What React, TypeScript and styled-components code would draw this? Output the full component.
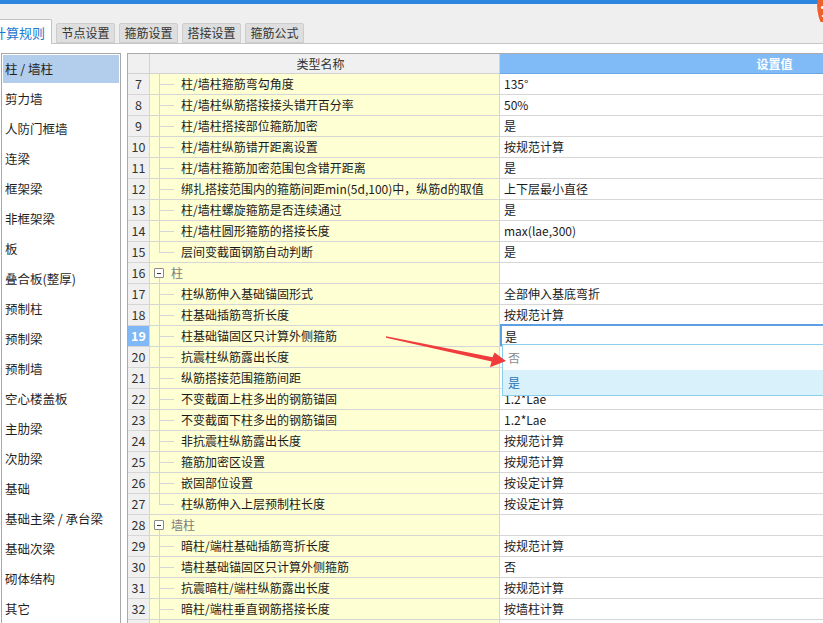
import * as React from 'react';
import styled, { createGlobalStyle } from 'styled-components';

const GlobalStyle = createGlobalStyle`
  html, body {
    margin: 0;
    padding: 0;
    background: #fff;
  }
  body {
    font-family: "Noto Sans CJK SC", "Noto Sans", sans-serif;
    font-size: 12px;
    color: #1a1a1a;
  }
`;

const Page = styled.div`
  position: relative;
  width: 823px;
  height: 623px;
  overflow: hidden;
  display: flex;
  flex-direction: column;
  background: #fff;
`;

const TopStrip = styled.div`
  flex: none;
  height: 4px;
  background: #2d86e0;
`;

const TabBar = styled.div`
  flex: none;
  box-sizing: border-box;
  height: 40px;
  display: flex;
  align-items: flex-end;
  gap: 4px;
  background: #efefef;
  border-bottom: 1px solid #c6c6c6;
`;

const Tab = styled.div<{ $active?: boolean }>`
  box-sizing: border-box;
  flex: none;
  width: ${p => (p.$active ? 66 : 59)}px;
  height: ${p => (p.$active ? 25 : 20)}px;
  margin-left: ${p => (p.$active ? -14 : 0)}px;
  margin-bottom: ${p => (p.$active ? -1 : 0)}px;
  display: flex;
  align-items: center;
  justify-content: center;
  border: 1px solid ${p => (p.$active ? '#c2c2c2' : '#cdcdcd')};
  border-bottom: ${p => (p.$active ? 'none' : '1px solid #cdcdcd')};
  border-radius: 2px 2px 0 0;
  background: ${p => (p.$active ? '#fff' : '#dedede')};
  color: ${p => (p.$active ? '#1d78d0' : '#333')};
  font-size: ${p => (p.$active ? 13 : 12)}px;
  line-height: 1;
  white-space: nowrap;
`;

const Body = styled.div`
  flex: 1;
  min-height: 0;
  display: flex;
  align-items: flex-start;
  gap: 6px;
  padding: 9px 0 0 1px;
`;

const Sidebar = styled.div`
  box-sizing: border-box;
  flex: none;
  width: 120px;
  height: 620px;
  display: flex;
  flex-direction: column;
  gap: 2px;
  padding: 1px;
  border: 1px solid #a9a9a9;
`;

const SideItem = styled.div<{ $selected?: boolean }>`
  flex: none;
  height: 28px;
  display: flex;
  align-items: center;
  padding-left: 2px;
  background: ${p => (p.$selected ? '#b3cdec' : 'transparent')};
  color: #1f1f1f;
  font-size: 12.5px;
  line-height: 1;
  white-space: nowrap;
`;

const Grid = styled.div`
  box-sizing: border-box;
  flex: none;
  width: 923px;
  border-top: 1px solid #ababab;
  border-left: 1px solid #ababab;
`;

const Row = styled.div<{ $head?: boolean }>`
  display: grid;
  grid-template-columns: 22px 350px 1fr;
  height: ${p => (p.$head ? 20 : 21)}px;
  line-height: 1;
`;

const HeadCell = styled.div<{ $accent?: boolean; $shift?: number }>`
  box-sizing: border-box;
  display: flex;
  align-items: center;
  justify-content: center;
  padding-right: ${p => p.$shift || 0}px;
  background: ${p => (p.$accent ? '#80bbf8' : '#f0f0f0')};
  border-right: 1px solid ${p => (p.$accent ? '#9ccaf7' : '#d2d2d2')};
  border-bottom: 1px solid ${p => (p.$accent ? '#6aa5e6' : '#d2d2d2')};
  color: ${p => (p.$accent ? '#fff' : '#333')};
  font-weight: ${p => (p.$accent ? 700 : 400)};
`;

const NumCell = styled.div<{ $active?: boolean }>`
  box-sizing: border-box;
  display: flex;
  align-items: center;
  justify-content: center;
  background: ${p => (p.$active ? '#7fb8f5' : '#f0f0f0')};
  border-right: 1px solid #d6d6d6;
  border-bottom: 1px solid #d6d6d6;
  color: ${p => (p.$active ? '#fff' : '#333')};
  font-weight: ${p => (p.$active ? 700 : 400)};
  font-size: 12.5px;
`;

const NameCell = styled.div<{ $group?: boolean }>`
  box-sizing: border-box;
  display: flex;
  align-items: stretch;
  padding-left: ${p => (p.$group ? 4 : 9)}px;
  background: #ffffd4;
  border-right: 1px solid #d6d6d6;
  border-bottom: 1px solid #d6d6d6;
  color: ${p => (p.$group ? '#7d7d7d' : '#1a1a1a')};
  white-space: nowrap;
  overflow: hidden;
`;

const Label = styled.span`
  display: flex;
  align-items: center;
`;

const Guide = styled.span<{ $last?: boolean }>`
  position: relative;
  flex: none;
  width: 22px;
  &::before {
    content: '';
    position: absolute;
    left: 0;
    top: 0;
    width: 1px;
    height: ${p => (p.$last ? '50%' : 'calc(100% + 1px)')};
    background: #d6d6d6;
  }
  &::after {
    content: '';
    position: absolute;
    left: 0;
    top: 50%;
    width: 15px;
    height: 1px;
    background: #d6d6d6;
  }
`;

const Toggle = styled.span`
  position: relative;
  flex: none;
  width: 10px;
  margin-right: 7px;
  display: flex;
  align-items: center;
  &::after {
    content: '';
    position: absolute;
    left: 5px;
    top: calc(50% + 5px);
    bottom: -1px;
    width: 1px;
    background: #d6d6d6;
  }
`;

const ToggleBox = styled.span`
  box-sizing: border-box;
  width: 10px;
  height: 10px;
  border: 1px solid #8a8a8a;
  border-radius: 1px;
  background: #fff;
  display: flex;
  align-items: center;
  justify-content: center;
  &::before {
    content: '';
    width: 4px;
    height: 1px;
    background: #333;
  }
`;

const ValueCell = styled.div`
  position: relative;
  box-sizing: border-box;
  display: flex;
  align-items: center;
  padding-left: 4px;
  background: #fff;
  border-bottom: 1px solid #d6d6d6;
  white-space: nowrap;
`;

const Editor = styled.div`
  position: absolute;
  z-index: 4;
  top: -2px;
  left: 0;
  right: 0;
  bottom: 0;
  box-sizing: border-box;
  display: flex;
  align-items: center;
  padding-left: 3px;
  padding-top: 1px;
  background: #fff;
  border-top: 2px solid #5c9fe3;
  border-left: 2px solid #5c9fe3;
`;

const Dropdown = styled.div`
  position: absolute;
  z-index: 5;
  top: 18px;
  left: 2px;
  width: 640px;
  background: #fff;
  border: 1px solid #8ccfec;
`;

const Option = styled.div<{ $hover?: boolean }>`
  height: 25px;
  display: flex;
  align-items: center;
  padding-left: 5px;
  background: ${p => (p.$hover ? '#d9f1fa' : '#fff')};
  color: ${p => (p.$hover ? '#2a73b6' : '#8a8a8a')};
`;

const Arrow = styled.svg`
  position: absolute;
  z-index: 10;
  left: 0;
  top: 0;
  pointer-events: none;
`;

const CornerIcon = styled.svg`
  position: absolute;
  right: 0;
  top: 0;
`;

const sideItems = [
  '柱 / 墙柱', '剪力墙', '人防门框墙', '连梁', '框架梁', '非框架梁', '板', '叠合板(整厚)',
  '预制柱', '预制梁', '预制墙', '空心楼盖板', '主肋梁', '次肋梁', '基础',
  '基础主梁 / 承台梁', '基础次梁', '砌体结构', '其它',
];

interface RuleRow {
  no?: number;
  name: string;
  value?: string;
  group?: boolean;
  last?: boolean;
}

const rows: RuleRow[] = [
  { no: 7, name: '柱/墙柱箍筋弯勾角度', value: '135°' },
  { no: 8, name: '柱/墙柱纵筋搭接接头错开百分率', value: '50%' },
  { no: 9, name: '柱/墙柱搭接部位箍筋加密', value: '是' },
  { no: 10, name: '柱/墙柱纵筋错开距离设置', value: '按规范计算' },
  { no: 11, name: '柱/墙柱箍筋加密范围包含错开距离', value: '是' },
  { no: 12, name: '绑扎搭接范围内的箍筋间距min(5d,100)中，纵筋d的取值', value: '上下层最小直径' },
  { no: 13, name: '柱/墙柱螺旋箍筋是否连续通过', value: '是' },
  { no: 14, name: '柱/墙柱圆形箍筋的搭接长度', value: 'max(lae,300)' },
  { no: 15, name: '层间变截面钢筋自动判断', value: '是', last: true },
  { no: 16, name: '柱', group: true },
  { no: 17, name: '柱纵筋伸入基础锚固形式', value: '全部伸入基底弯折' },
  { no: 18, name: '柱基础插筋弯折长度', value: '按规范计算' },
  { no: 19, name: '柱基础锚固区只计算外侧箍筋', value: '是' },
  { no: 20, name: '抗震柱纵筋露出长度' },
  { no: 21, name: '纵筋搭接范围箍筋间距' },
  { no: 22, name: '不变截面上柱多出的钢筋锚固', value: '1.2*Lae' },
  { no: 23, name: '不变截面下柱多出的钢筋锚固', value: '1.2*Lae' },
  { no: 24, name: '非抗震柱纵筋露出长度', value: '按规范计算' },
  { no: 25, name: '箍筋加密区设置', value: '按规范计算' },
  { no: 26, name: '嵌固部位设置', value: '按设定计算' },
  { no: 27, name: '柱纵筋伸入上层预制柱长度', value: '按设定计算', last: true },
  { no: 28, name: '墙柱', group: true },
  { no: 29, name: '暗柱/端柱基础插筋弯折长度', value: '按规范计算' },
  { no: 30, name: '墙柱基础锚固区只计算外侧箍筋', value: '否' },
  { no: 31, name: '抗震暗柱/端柱纵筋露出长度', value: '按规范计算' },
  { no: 32, name: '暗柱/端柱垂直钢筋搭接长度', value: '按墙柱计算' },
  { name: '' },
];

const ACTIVE_ROW = 19;

const App = () => {
  return (
    <Page>
      <GlobalStyle />
      <TopStrip />
      <TabBar>
        <Tab $active>计算规则</Tab>
        <Tab>节点设置</Tab>
        <Tab>箍筋设置</Tab>
        <Tab>搭接设置</Tab>
        <Tab>箍筋公式</Tab>
      </TabBar>
      <Body>
        <Sidebar>
          {sideItems.map((item, i) => (
            <SideItem key={item} $selected={i === 0}>
              {item}
            </SideItem>
          ))}
        </Sidebar>
        <Grid>
          <Row $head>
            <HeadCell />
            <HeadCell $shift={8}>类型名称</HeadCell>
            <HeadCell $accent>设置值</HeadCell>
          </Row>
          {rows.map((row, i) => (
            <Row key={i}>
              <NumCell $active={row.no === ACTIVE_ROW}>{row.no}</NumCell>
              <NameCell $group={row.group}>
                {row.group ? (
                  <Toggle>
                    <ToggleBox />
                  </Toggle>
                ) : (
                  <Guide $last={row.last} />
                )}
                <Label>{row.name}</Label>
              </NameCell>
              <ValueCell>
                {row.no === ACTIVE_ROW ? (
                  <>
                    <Editor>{row.value}</Editor>
                    <Dropdown>
                      <Option>否</Option>
                      <Option $hover>是</Option>
                    </Dropdown>
                  </>
                ) : (
                  row.value
                )}
              </ValueCell>
            </Row>
          ))}
        </Grid>
      </Body>
      <Arrow width="823" height="623" viewBox="0 0 823 623">
        <polygon
          points="386,336.2 492.5,357.2 494.5,352.6 506,361 490,367.2 491.6,361.4 386,337.8"
          fill="#f03c3c"
        />
      </Arrow>
      <CornerIcon width="7" height="23" viewBox="0 0 7 23">
        <path d="M1.5 0 L7 0 L7 22 L4.5 22 Q0 11 1.5 0 Z" fill="#f0602c" />
        <circle cx="6.4" cy="7.5" r="1.5" fill="#fff" />
        <circle cx="6.8" cy="16" r="1.1" fill="#fff" />
      </CornerIcon>
    </Page>
  );
};

export default App;
